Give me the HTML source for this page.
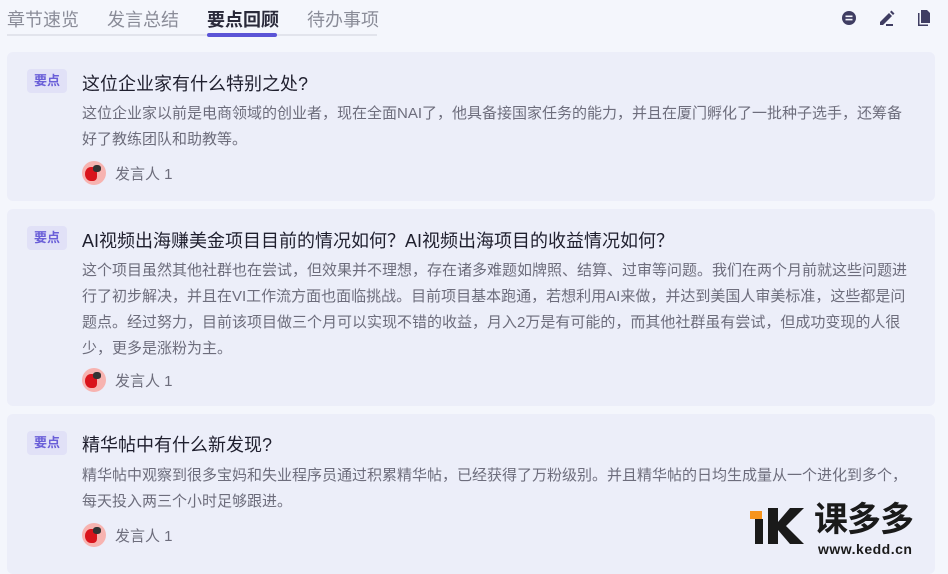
<!DOCTYPE html>
<html><head><meta charset="utf-8"><style>
*{margin:0;padding:0;box-sizing:border-box}
body{width:948px;height:566px;overflow:hidden;background:#f4f6fc;font-family:"Liberation Sans","Noto Sans CJK SC",sans-serif;position:relative}
.tabs{position:absolute;left:7px;top:0;width:370px;height:36px;border-bottom:2px solid #e2e4ec}
.tab{position:absolute;top:6px;font-size:18px;color:#8a8c98}
.tab.act{color:#2a2a3a;font-weight:bold}
.ul{position:absolute;left:207px;top:33px;width:70px;height:4px;background:#5b54d6;border-radius:2px}
.card{position:absolute;left:7px;width:928px;background:#eceef9;border-radius:6px}
.badge{position:absolute;left:20px;width:40px;height:24px;background:#e1e1f7;border-radius:4px;color:#6a5fd8;font-size:13px;font-weight:bold;text-align:center;line-height:24px}
.t{position:absolute;left:75px;font-size:18px;color:#1f1f2e}
.b{position:absolute;left:75px;width:832px;font-size:15px;line-height:26px;color:#6d6d7c}
.sp{position:absolute;left:75px;font-size:15px;color:#6d6d7c;display:flex;align-items:center}
.av{width:24px;height:24px;border-radius:50%;background:#f7b3b0;margin-right:9px;position:relative;overflow:hidden}
.av:after{content:"";position:absolute;left:3px;top:6px;width:12px;height:14px;background:#d9141c;border-radius:50% 40% 30% 50%}
.av:before{content:"";position:absolute;left:11px;top:4px;width:8px;height:7px;background:#333;border-radius:40%;z-index:1}
</style></head><body>
<div class="tabs"></div>
<div class="tab" style="left:7px">章节速览</div>
<div class="tab" style="left:107px">发言总结</div>
<div class="tab act" style="left:207px">要点回顾</div>
<div class="tab" style="left:307px">待办事项</div>
<div class="ul"></div>
<svg style="position:absolute;left:841px;top:10px" width="16" height="16" viewBox="0 0 16 16"><circle cx="8" cy="8" r="7" fill="#3f3d62"/><rect x="4.5" y="5.5" width="7" height="1.6" fill="#f4f6fc"/><rect x="4.5" y="8.8" width="7" height="1.6" fill="#f4f6fc"/></svg>
<svg style="position:absolute;left:878px;top:10px" width="18" height="16" viewBox="0 0 18 16"><path d="M2 12 L11 3 L14 6 L5 15 L2 15Z M12 2 L13.5 0.5 L16.5 3.5 L15 5Z" fill="#3f3d62"/><rect x="8" y="14" width="7" height="2" fill="#3f3d62"/></svg>
<svg style="position:absolute;left:916px;top:9px" width="16" height="18" viewBox="0 0 16 18"><path d="M5 1 H11 L14 4 V14 H5Z" fill="#3f3d62"/><path d="M2 4 V17 H12 V15.5 H3.5 V4Z" fill="#3f3d62"/></svg>

<div class="card" style="top:52px;height:149px">
<div class="badge" style="top:17px">要点</div>
<div class="t" style="top:18px">这位企业家有什么特别之处?</div>
<div class="b" style="top:49px;width:830px">这位企业家以前是电商领域的创业者，现在全面NAI了，他具备接国家任务的能力，并且在厦门孵化了一批种子选手，还筹备好了教练团队和助教等。</div>
<div class="sp" style="top:109px"><div class="av"></div>发言人 1</div>
</div>

<div class="card" style="top:209px;height:197px">
<div class="badge" style="top:17px">要点</div>
<div class="t" style="top:18px">AI视频出海赚美金项目目前的情况如何？AI视频出海项目的收益情况如何？</div>
<div class="b" style="top:49px">这个项目虽然其他社群也在尝试，但效果并不理想，存在诸多难题如牌照、结算、过审等问题。我们在两个月前就这些问题进行了初步解决，并且在VI工作流方面也面临挑战。目前项目基本跑通，若想利用AI来做，并达到美国人审美标准，这些都是问题点。经过努力，目前该项目做三个月可以实现不错的收益，月入2万是有可能的，而其他社群虽有尝试，但成功变现的人很少，更多是涨粉为主。</div>
<div class="sp" style="top:159px"><div class="av"></div>发言人 1</div>
</div>

<div class="card" style="top:414px;height:160px">
<div class="badge" style="top:17px">要点</div>
<div class="t" style="top:17px">精华帖中有什么新发现?</div>
<div class="b" style="top:49px">精华帖中观察到很多宝妈和失业程序员通过积累精华帖，已经获得了万粉级别。并且精华帖的日均生成量从一个进化到多个，每天投入两三个小时足够跟进。</div>
<div class="sp" style="top:109px"><div class="av"></div>发言人 1</div>
</div>

<div style="position:absolute;left:748px;top:508px;width:22px;height:40px">
<div style="position:absolute;left:2px;top:3px;width:12px;height:8px;background:#f7941d"></div>
<div style="position:absolute;left:7px;top:11px;width:8px;height:25px;background:#1a1a1a"></div>
</div>
<svg style="position:absolute;left:768px;top:508px" width="40" height="38" viewBox="0 0 40 38"><path d="M0 0 H10 V14 L22 0 H36 L18 18 L36 36 H22 L10 22 V36 H0Z" fill="#1a1a1a"/></svg>
<div style="position:absolute;left:814px;top:502px;font-size:34px;font-weight:bold;color:#1a1a1a;letter-spacing:-1px;line-height:36px">课多多</div>
<div style="position:absolute;left:818px;top:541px;font-size:14px;font-weight:bold;color:#1a1a1a;letter-spacing:0.5px">www.kedd.cn</div>
</body></html>
